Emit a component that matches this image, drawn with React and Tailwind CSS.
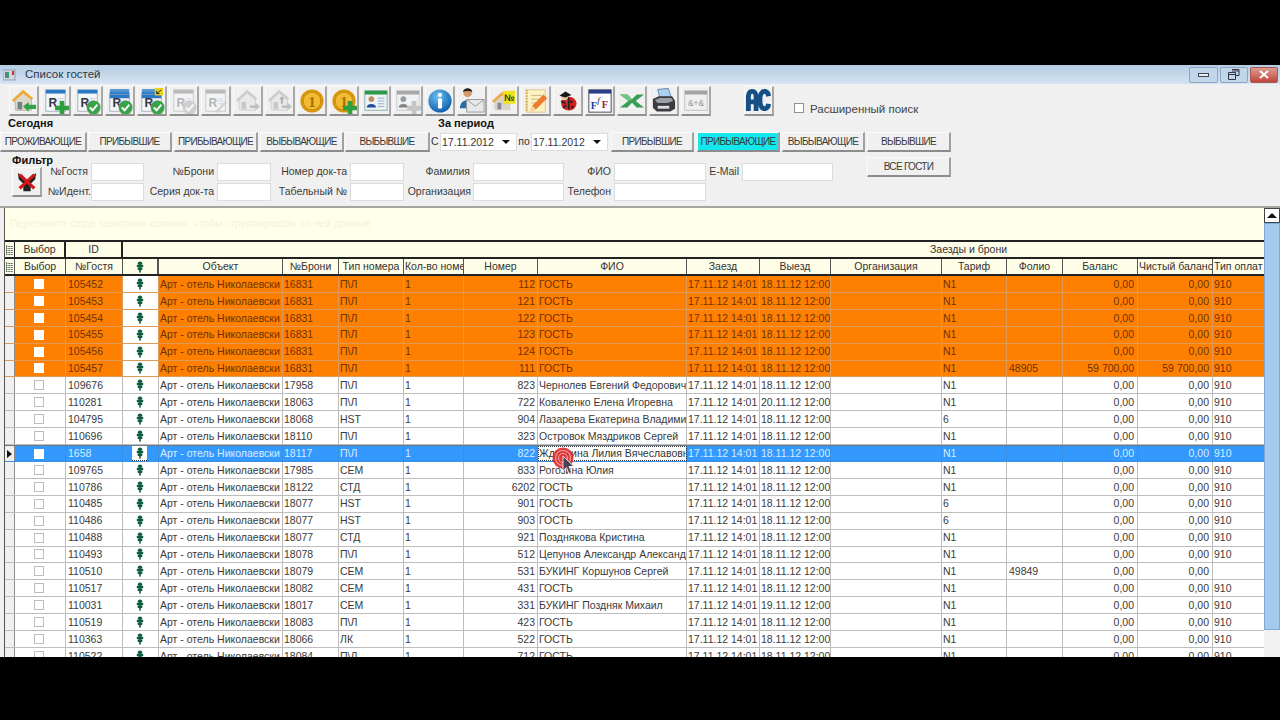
import React from "react";

const cols = [51, 57, 36, 124, 56, 65, 60, 74, 149, 73, 71, 111, 65, 56, 75, 75, 51];
const heads = ["Выбор", "№Гостя", "pin", "Объект", "№Брони", "Тип номера", "Кол-во номе", "Номер", "ФИО", "Заезд", "Выезд", "Организация", "Тариф", "Фолио", "Баланс", "Чистый баланс", "Тип оплат"];

const G = "ГОСТЬ";
const raw = [
  ["105452", "16831", "П\\Л", "112", G],
  ["105453", "16831", "П\\Л", "121", G],
  ["105454", "16831", "П\\Л", "122", G],
  ["105455", "16831", "П\\Л", "123", G],
  ["105456", "16831", "П\\Л", "124", G],
  ["105457", "16831", "П\\Л", "111", G, "18.11.12 12:00", "N1", "48905", "59 700,00", "59 700,00"],
  ["109676", "17958", "П\\Л", "823", "Чернолев Евгений Федорович"],
  ["110281", "18063", "П\\Л", "722", "Коваленко Елена Игоревна", "20.11.12 12:00"],
  ["104795", "18068", "HST", "904", "Лазарева Екатерина Владимир", "18.11.12 12:00", "6"],
  ["110696", "18110", "П\\Л", "323", "Островок Мяздриков Сергей"],
  ["1658", "18117", "П\\Л", "822", "Жданкина Лилия Вячеславовн"],
  ["109765", "17985", "СЕМ", "833", "Рогозина Юлия"],
  ["110786", "18122", "СТД", "6202", G],
  ["110485", "18077", "HST", "901", G, "18.11.12 12:00", "6"],
  ["110486", "18077", "HST", "903", G, "18.11.12 12:00", "6"],
  ["110488", "18077", "СТД", "921", "Позднякова Кристина"],
  ["110493", "18078", "П\\Л", "512", "Цепунов Александр Александ"],
  ["110510", "18079", "СЕМ", "531", "БУКИНГ Коршунов Сергей", "18.11.12 12:00", "N1", "49849", "0,00", "0,00", ""],
  ["110517", "18082", "СЕМ", "431", G],
  ["110031", "18017", "СЕМ", "331", "БУКИНГ Поздняк Михаил", "19.11.12 12:00"],
  ["110519", "18083", "П\\Л", "423", G],
  ["110363", "18066", "ЛК", "522", G],
  ["110522", "18084", "П\\Л", "712", G],
];

function Pin() {
  return (
    <svg width="8" height="12" viewBox="0 0 8 12">
      <g fill="#0f5c3c">
        <ellipse cx="4" cy="2.2" rx="2.2" ry="1.8" />
        <ellipse cx="4" cy="5" rx="3.4" ry="1.7" />
        <ellipse cx="4" cy="7.8" rx="2.6" ry="1.5" />
        <rect x="3.2" y="8" width="1.6" height="3.6" />
      </g>
    </svg>
  );
}

function ListMark() {
  return (
    <svg width="7" height="10" viewBox="0 0 7 10">
      <g stroke="#444" strokeWidth="1" strokeDasharray="1 0.6">
        <path d="M0 1.5h7M0 3.5h7M0 5.5h7M0 7.5h7M0 9.5h7" />
      </g>
      <path d="M0 0v10" stroke="#6a8a6a" strokeWidth="2" />
    </svg>
  );
}

const Badge = ({ kind, gray }) => {
  if (kind === "plus")
    return <path d="M18 14h5v5h5v5h-5v5h-5v-5h-5v-5h5z" fill={gray ? "#b4b4b4" : "#2f9e3e"} />;
  if (kind === "check")
    return (
      <g>
        <circle cx="20" cy="21" r="7.5" fill={gray ? "#c4c4c4" : "#3aa34a"} />
        <path d="M16 21l3 3 5-6" stroke="#fff" strokeWidth="2" fill="none" />
      </g>
    );
  return null;
};

function Doc({ stack, badge, gray, corner, pencil, letter = "R" }) {
  const bar = gray ? "#a8a8a8" : "#2b79c4";
  return (
    <svg width="26" height="26" viewBox="0 0 28 28" style={{ opacity: gray ? 0.75 : 1 }}>
      {stack && <rect x="3" y="1" width="21" height="8" rx="1" fill={bar} opacity="0.75" />}
      {stack && <rect x="3" y="4" width="21" height="8" rx="1" fill={bar} opacity="0.85" />}
      <rect x="3" y={stack ? 7 : 2} width="21" height={stack ? 18 : 23} fill="#f4f6f8" stroke={gray ? "#bbb" : "#9fb0c2"} />
      <rect x="3" y={stack ? 7 : 2} width="21" height="4" fill={bar} />
      <text x="6" y="20" fontSize="13" fontFamily="Liberation Sans" fontWeight="bold" fill={gray ? "#a0a0a0" : "#334"}>{letter}</text>
      <path d="M16 14h6M16 17h6M16 11.5h6" stroke="#ccd" />
      {corner && <rect x="17" y="0" width="9" height="8" fill="#e8d21a" />}
      {corner && <path d="M24 2l-5 4M19 3v3h3" stroke="#222" fill="none" />}
      {pencil && <path d="M13 25l11-11 2 2-11 11z" fill="#c8c8c8" />}
      {badge && <Badge kind={badge} gray={gray} />}
    </svg>
  );
}

function House({ gray, up }) {
  return (
    <svg width="26" height="26" viewBox="0 0 28 28" style={{ opacity: gray ? 0.55 : 1 }}>
      <path d="M4 12L13 4l9 7v13H5z" fill={gray ? "#e4e4e4" : "#ddd8cc"} stroke={gray ? "#bbb" : "#b8b4a8"} />
      <path d="M1 13L13 2l11 9-2 2-9-7-10 9z" fill={gray ? "#b0b0b0" : "#f0a83c"} />
      <rect x="7" y="15" width="5" height="8" fill={gray ? "#a8a8a8" : "#6f8488"} />
      {up && <path d="M13 12l3-3 3 3-2 0v5h-2v-5z" fill="#777" />}
      {gray ? (
        <path d="M27 20l-5-4v2.500h-6v3h6V24z" fill="#9a9a9a" />
      ) : (
        <path d="M13 20l6-5v3h8v4.500h-8v3z" fill="#2fa24a" />
      )}
    </svg>
  );
}

function Coin({ plus }) {
  return (
    <svg width="26" height="26" viewBox="0 0 28 28">
      <circle cx="14" cy="14" r="12.5" fill="#d8960e" />
      <circle cx="14" cy="14" r="9.5" fill="#f2bc30" stroke="#c98a10" />
      <text x="14" y="20" textAnchor="middle" fontSize="16" fontWeight="bold" fontFamily="Liberation Serif" fill="#a86c08">1</text>
      {plus && <Badge kind="plus" />}
    </svg>
  );
}

function Card({ gray }) {
  return (
    <svg width="26" height="26" viewBox="0 0 28 28" style={{ opacity: gray ? 0.7 : 1 }}>
      <rect x="2" y="3" width="24" height="21" fill="#eef3f6" stroke={gray ? "#bbb" : "#8aa"} />
      <rect x="2" y="3" width="24" height="4" fill={gray ? "#8a8a8a" : "#2f9a4a"} />
      <circle cx="9" cy="12" r="3" fill={gray ? "#777" : "#c58a5a"} />
      <path d="M4 21c0-5 10-5 10 0z" fill={gray ? "#555" : "#1f4f9a"} />
      {!gray && <path d="M16 11h7M16 14h7M16 17h7M16 20h7" stroke="#8fa8c8" />}
      {gray && <Badge kind="plus" gray />}
    </svg>
  );
}

function Info() {
  return (
    <svg width="26" height="26" viewBox="0 0 28 28">
      <defs>
        <radialGradient id="ig" cx="40%" cy="30%" r="75%">
          <stop offset="0" stopColor="#6cc0f4" />
          <stop offset="1" stopColor="#0c5aa8" />
        </radialGradient>
      </defs>
      <circle cx="14" cy="14" r="12.5" fill="url(#ig)" />
      <circle cx="14" cy="7.5" r="2.3" fill="#fff" />
      <rect x="11.8" y="11" width="4.4" height="11" rx="1" fill="#fff" />
    </svg>
  );
}

function Mail() {
  return (
    <svg width="27" height="27" viewBox="0 0 28 28">
      <circle cx="10" cy="6" r="4.5" fill="#d59a6a" />
      <path d="M5 5c1-5 9-5 10 0-3-1-7-1-10 0z" fill="#222" />
      <path d="M2 22c0-11 15-11 15 0z" fill="#2a6aa8" />
      <rect x="9" y="13" width="18" height="13" fill="#e6e8ea" stroke="#999" />
      <path d="M9 13l9 7 9-7" fill="none" stroke="#999" />
    </svg>
  );
}

function HouseNo() {
  return (
    <svg width="26" height="26" viewBox="0 0 28 28">
      <path d="M3 14L12 6l9 7v11H4z" fill="#d8d4c8" />
      <path d="M1 14L12 4l8 6-2 2-6-4-9 8z" fill="#eeaa44" />
      <rect x="7" y="16" width="4" height="7" fill="#889" />
      <rect x="13" y="3" width="13" height="14" fill="#f2e21c" />
      <text x="14" y="14" fontSize="10" fontWeight="bold" fontFamily="Liberation Sans" fill="#2a3a1a">№</text>
    </svg>
  );
}

function Note() {
  return (
    <svg width="26" height="26" viewBox="0 0 28 28">
      <rect x="4" y="2" width="20" height="24" fill="#fdf2c0" stroke="#d8c48a" />
      <path d="M4 2v24" stroke="#e0b050" strokeWidth="2.5" strokeDasharray="1.5 1.5" />
      <path d="M9 8h11M9 12h11M9 16h6" stroke="#c4b48a" />
      <path d="M8 25l2-6L22 7l4 4-12 12z" fill="#ee7a2a" />
      <path d="M8 25l2-6 4 4z" fill="#f4d8a8" />
    </svg>
  );
}

function Bug() {
  return (
    <svg width="24" height="24" viewBox="0 0 28 28">
      <ellipse cx="15" cy="17" rx="9" ry="8" fill="#d42020" />
      <circle cx="10" cy="9" r="4" fill="#e8c8a8" />
      <path d="M4 8l7-5 7 4-7 3z" fill="#181818" />
      <path d="M6 14l5 3M8 22l4-3M15 10v14" stroke="#222" strokeWidth="2" />
      <circle cx="18" cy="15" r="1.6" fill="#222" />
      <circle cx="19" cy="21" r="1.6" fill="#222" />
    </svg>
  );
}

function Ff() {
  return (
    <svg width="26" height="26" viewBox="0 0 28 28">
      <rect x="2" y="2" width="24" height="24" fill="#fbfbff" stroke="#445" />
      <rect x="2" y="2" width="24" height="4" fill="#2a3e8a" />
      <text x="4" y="23" fontSize="11" fontWeight="bold" fontFamily="Liberation Serif" fill="#1a3a9a">F</text>
      <text x="11" y="16" fontSize="10" fontStyle="italic" fontFamily="Liberation Serif" fill="#222">f</text>
      <text x="16" y="21" fontSize="11" fontWeight="bold" fontFamily="Liberation Serif" fill="#a02020">F</text>
    </svg>
  );
}

function Excel() {
  return (
    <svg width="26" height="26" viewBox="0 0 28 28">
      <path d="M1 7h8l5 5 5-5h8l-9 7 9 7h-8l-5-5-5 5H1l9-7z" fill="#3a9f55" />
      <path d="M1 7h8l5 5-4 2z" fill="#70c880" />
    </svg>
  );
}

function Printer() {
  return (
    <svg width="28" height="28" viewBox="0 0 28 28">
      <path d="M8 2l11-1 3 9H10z" fill="#a8d0f0" stroke="#68a" />
      <path d="M3 12l6-3h14l3 5v8l-5 3H7l-4-4z" fill="#3c3c40" />
      <path d="M5 13l5-2h12l2 3-6 2H8z" fill="#9aa0a8" />
      <path d="M8 19h12v3H8z" fill="#ddd" />
    </svg>
  );
}

function Grid() {
  return (
    <svg width="26" height="26" viewBox="0 0 28 28" style={{ opacity: 0.75 }}>
      <rect x="2" y="3" width="24" height="21" fill="#f0f0f0" stroke="#b0b0b0" />
      <rect x="2" y="3" width="24" height="4" fill="#8a8a8a" />
      <text x="14" y="19" textAnchor="middle" fontSize="9" fontFamily="Liberation Sans" fill="#777">&amp;+&amp;</text>
    </svg>
  );
}

function AC() {
  return (
    <svg width="27" height="27" viewBox="0 0 28 28">
      <path d="M1 25V11C1 5 3.500 2 7.500 2S14 5 14 11v14h-5v-7H6v7z M6 13h3v-2c0-3-.5-4-1.500-4S6 8 6 11z" fill="#164f86" fillRule="evenodd" />
      <path d="M27 9c-.5-4.500-3.500-7-6.500-7C15.500 2 13 7 13 13.500S15.500 25 20.500 25c3 0 6-2.500 6.500-7l-5-1c-.3 2-1 3-1.800 3-1.500 0-2.200-2.500-2.200-6.500S18.700 7 20.200 7c.8 0 1.500 1 1.800 3z" fill="#164f86" />
    </svg>
  );
}

function FilterX() {
  return (
    <svg width="22" height="22" viewBox="0 0 24 24">
      <path d="M2 2l8 8h4l8-8-1 7-5 5v8H8v-8L3 9z" fill="#222" />
      <path d="M4 4l16 15M20 4L4 19" stroke="#d01818" strokeWidth="3.5" />
    </svg>
  );
}

const tools = [
  <House />, <Doc badge="plus" />, <Doc badge="check" />, <Doc stack badge="check" />, <Doc stack corner badge="check" />,
  <Doc gray badge="check" />, <Doc gray pencil />, <House gray />, <House gray up />, <Coin />, <Coin plus />,
  <Card />, <Card gray />, <Info />, <Mail />, <HouseNo />, <Note />, <Bug />, <Ff />, <Excel />, <Printer />, <Grid />,
];

function ToolBtn({ children, className = "" }) {
  return (
    <div className={"w-[30px] h-[30px] shrink-0 flex items-center justify-center bg-[#f0f0f0] border border-t-[#fbfbfb] border-l-[#fbfbfb] border-r-[#a8a8a8] border-b-[#909090] border-b-2 border-r-2 " + className}>
      {children}
    </div>
  );
}

function Btn({ w, children, cyan, className = "" }) {
  return (
    <div
      style={{ width: w }}
      className={
        "shrink-0 h-[20px] flex items-center justify-center text-[10px] tracking-[-0.7px] text-[#3a3a3a] whitespace-nowrap border border-t-[#fafafa] border-l-[#fafafa] border-r-[#a0a0a0] border-b-[#8c8c8c] border-b-2 border-r-2 " +
        (cyan ? "bg-[#12e8ee] text-[#0b3a66] " : "bg-[#f0f0f0] ") +
        className
      }
    >
      {children}
    </div>
  );
}

function DateBox() {
  return (
    <div className="w-[77px] h-[18px] shrink-0 bg-white border border-[#dcdcdc] flex items-center justify-between pl-[1px] pr-[6px]">
      <span className="text-[10.5px] text-[#333] leading-none">17.11.2012</span>
      <span className="w-0 h-0 border-l-[4px] border-r-[4px] border-t-[4px] border-l-transparent border-r-transparent border-t-[#111]" />
    </div>
  );
}

function Field() {
  return <div className="h-[18px] bg-white border border-[#dcdcdc]" />;
}

function Lbl({ children, pr = "pr-[3px]" }) {
  return <div className={`h-[18px] ${pr} flex items-center justify-end text-[10.5px] text-[#3c3c3c] whitespace-nowrap overflow-visible`}>{children}</div>;
}

function Row({ data }) {
  const [id, bron, type, num, fio, out = "18.11.12 12:00", tarif = "N1", folio = "", bal = "0,00", net = "0,00", pay = "910"] = data;
  const i = raw.indexOf(data);
  const orange = i < 6;
  const sel = id === "1658";
  const bg = sel ? "bg-[#3399ff]" : orange ? "bg-[#ff8000]" : "bg-white";
  const txt = sel ? "text-[#d8ecff]" : orange ? "text-[#6e3200]" : "text-[#3a3a3a]";
  const line = sel ? "border-[#3a8fe0]" : orange ? "border-[#dd9a58]" : "border-[#bdbdbd]";
  const Cell = ({ w, right, className = "", children }) => (
    <div
      style={{ width: w }}
      className={`shrink-0 h-full overflow-hidden whitespace-nowrap border-r ${line} pl-[1px] pr-[2px] flex items-center ${right ? "justify-end" : ""} ${className}`}
    >
      {children}
    </div>
  );
  return (
    <div className={`flex h-[16.92px] shrink-0 border-b ${line} ${bg} ${txt} text-[10.5px] leading-none ${sel ? "border-t border-t-[#6a7a8a]" : ""}`}>
      <div className="w-[10px] shrink-0 bg-[#f0f0f0] border-r border-[#8c8c8c] flex items-center justify-center">
        {sel && <span className="w-0 h-0 border-t-[4px] border-b-[4px] border-l-[5px] border-t-transparent border-b-transparent border-l-[#111]" />}
      </div>
      <Cell w={cols[0]} className="justify-center !pl-0 !pr-[2px]">
        <span className={`w-[10px] h-[10px] ${orange || sel ? "bg-white" : "bg-white border border-[#bdbdbd]"}`} />
      </Cell>
      <Cell w={cols[1]} className="pl-[2px]">{id}</Cell>
      <Cell w={cols[2]} className={`justify-center !pl-0 !pr-[2px] ${orange ? "bg-white" : ""}`}>
        {sel ? (
          <span className="w-[15px] h-full bg-white border-b border-dotted border-[#333] flex items-center justify-center"><Pin /></span>
        ) : (
          <Pin />
        )}
      </Cell>
      <Cell w={cols[3]}>Арт - отель Николаевски</Cell>
      <Cell w={cols[4]}>{bron}</Cell>
      <Cell w={cols[5]}>{type}</Cell>
      <Cell w={cols[6]}>1</Cell>
      <Cell w={cols[7]} right className="pr-0">{num}</Cell>
      <Cell w={cols[8]} className={sel ? "bg-white text-[#333] outline outline-1 -outline-offset-1 outline-dotted outline-[#333]" : ""}>{fio}</Cell>
      <Cell w={cols[9]}>17.11.12 14:01</Cell>
      <Cell w={cols[10]}>{out}</Cell>
      <Cell w={cols[11]} />
      <Cell w={cols[12]}>{tarif}</Cell>
      <Cell w={cols[13]} className="pl-[2px]">{folio}</Cell>
      <Cell w={cols[14]} right className="pr-[3px]">{bal}</Cell>
      <Cell w={cols[15]} right className="pr-[3px]">{net}</Cell>
      <Cell w={cols[16]} className="border-r-0">{pay}</Cell>
    </div>
  );
}

export default function App() {
  return (
    <div className="w-[1280px] h-[720px] bg-black overflow-hidden pt-[65px] [font-family:'Liberation_Sans',Arial,sans-serif]">
      <div className="relative w-[1280px] h-[592px] bg-[#f0f0f0] flex flex-col overflow-hidden">
        {/* title bar */}
        <div className="h-[19px] shrink-0 flex items-center bg-gradient-to-b from-[#b4cce2] to-[#d6e4f2] pl-[3px] pr-[2px]">
          <svg width="13" height="12" viewBox="0 0 13 12" className="shrink-0">
            <rect x="0" y="1" width="12" height="10" fill="#cfd8e0" stroke="#8fa3b5" />
            <rect x="2" y="3" width="4" height="6" fill="#4f8f7a" />
            <rect x="9" y="2" width="2" height="4" fill="#d03030" />
          </svg>
          <span className="ml-[9px] text-[11.5px] text-[#2a3a4a]">Список гостей</span>
          <div className="ml-auto flex gap-[2px] items-center">
            <div className="w-[29px] h-[16px] rounded-[2px] border border-[#8aa6c2] bg-[#c2d6ea] flex items-center justify-center">
              <span className="w-[11px] h-[4px] border border-[#445] bg-[#e6eef6]" />
            </div>
            <div className="w-[28px] h-[16px] rounded-[2px] border border-[#8aa6c2] bg-[#c2d6ea] flex items-center justify-center">
              <svg width="12" height="11" viewBox="0 0 12 11"><path d="M4 .5h7v6H8M.5 3.500h7v7h-7z M.5 5.500h7M4 2h7" fill="none" stroke="#334" /></svg>
            </div>
            <div className="w-[28px] h-[16px] rounded-[2px] border border-[#a85a50] bg-gradient-to-b from-[#dc9a90] to-[#c0443a] flex items-center justify-center">
              <svg width="10" height="9" viewBox="0 0 10 9"><path d="M1 1l8 7M9 1L1 8" stroke="#fff" strokeWidth="2" /></svg>
            </div>
          </div>
        </div>

        {/* toolbar */}
        <div className="h-[32px] shrink-0 flex items-start pt-[2px] pl-[9px]">
          <div className="flex gap-[2px]">
            {tools.map((t, i) => <ToolBtn key={i}>{t}</ToolBtn>)}
          </div>
          <ToolBtn className="ml-[33px]"><AC /></ToolBtn>
          <div className="ml-[20px] mt-[17px] w-[10px] h-[10px] bg-white border border-[#8f8f8f] shrink-0" />
          <span className="ml-[6px] mt-[16px] text-[11.5px] leading-[14px] text-[#444] whitespace-nowrap">Расширенный поиск</span>
        </div>

        {/* captions */}
        <div className="h-[16px] shrink-0 flex items-start pt-[1px] text-[11px] font-bold text-[#111] leading-[13px]">
          <span className="ml-[8px] w-[430px]">Сегодня</span>
          <span>За период</span>
        </div>

        {/* quick filter buttons */}
        <div className="h-[20px] shrink-0 flex items-center">
          <Btn w={87}>ПРОЖИВАЮЩИЕ</Btn>
          <Btn w={84} className="ml-[1px]">ПРИБЫВШИЕ</Btn>
          <Btn w={84} className="ml-[2px]">ПРИБЫВАЮЩИЕ</Btn>
          <Btn w={84} className="ml-[2px]">ВЫБЫВАЮЩИЕ</Btn>
          <Btn w={85} className="ml-[1px]">ВЫБЫВШИЕ</Btn>
          <span className="w-[10px] pl-[1px] text-[10.5px] text-[#333]">С</span>
          <DateBox />
          <span className="w-[14px] text-center text-[10.5px] text-[#333]">по</span>
          <DateBox />
          <Btn w={83} className="ml-[3px]">ПРИБЫВШИЕ</Btn>
          <Btn w={83} cyan className="ml-[3px]">ПРИБЫВАЮЩИЕ</Btn>
          <Btn w={83} className="ml-[2px]">ВЫБЫВАЮЩИЕ</Btn>
          <Btn w={84} className="ml-[2px]">ВЫБЫВШИЕ</Btn>
        </div>

        {/* filter */}
        <div className="h-[54px] shrink-0 flex items-start pl-[12px] relative">
          <div className="w-[30px] shrink-0 pt-[1px]">
            <div className="h-[14px] text-[11px] font-bold text-[#111] leading-[14px] whitespace-nowrap">Фильтр</div>
            <ToolBtn><FilterX /></ToolBtn>
          </div>
          <div className="mt-[11px] grid gap-y-[2px] grid-cols-[49px_53px_73px_54px_79px_54px_69px_91px_50px_92px_36px_91px]">
            <Lbl>№Гостя</Lbl><Field />
            <Lbl>№Брони</Lbl><Field />
            <Lbl>Номер док-та</Lbl><Field />
            <Lbl>Фамилия</Lbl><Field />
            <Lbl>ФИО</Lbl><Field />
            <Lbl>E-Mail</Lbl><Field />
            <Lbl pr="pr-0">№Идент.</Lbl><Field />
            <Lbl>Серия док-та</Lbl><Field />
            <Lbl>Табельный №</Lbl><Field />
            <Lbl pr="pr-[2px]">Организация</Lbl><Field />
            <Lbl>Телефон</Lbl><Field />
          </div>
          <Btn w={84} className="ml-[34px] mt-[5px]">ВСЕ ГОСТИ</Btn>
        </div>

        {/* grid area */}
        <div className="flex-1 min-h-0 flex pl-[4px] border-t-2 border-[#a6a6a0]">
          <div className="w-[1260px] shrink-0 flex flex-col overflow-hidden border-l border-[#555]">
            <div className="h-[32px] shrink-0 bg-[#ffffea] flex items-center pl-[5px] text-[10.5px] text-[#f4f4d6] whitespace-nowrap">
              Перетяните сюда заголовок колонки, чтобы сгруппировать по ней данные
            </div>
            <div className="h-[15px] shrink-0 flex bg-[#fdfde8] border-t-2 border-b-2 border-[#222] text-[10.5px] text-[#333] leading-none box-content">
              <div className="w-[10px] shrink-0 border-r border-[#222] flex items-center justify-center"><ListMark /></div>
              <div style={{ width: cols[0] }} className="shrink-0 border-r-2 border-[#222] flex items-center justify-center">Выбор</div>
              <div style={{ width: cols[1] }} className="shrink-0 border-r-2 border-[#222] flex items-center justify-center">ID</div>
              <div className="flex-1 flex items-center pl-[807px] whitespace-nowrap">Заезды и брони</div>
            </div>
            <div className="h-[15px] shrink-0 flex bg-[#fdfde8] border-b-2 border-[#222] text-[10.5px] text-[#333] leading-none box-content">
              <div className="w-[10px] shrink-0 border-r border-[#555] flex items-center justify-center"><ListMark /></div>
              {heads.map((h, i) => (
                <div key={i} style={{ width: cols[i] }} className={`shrink-0 overflow-hidden whitespace-nowrap flex items-center ${i === heads.length - 1 ? "" : "border-r border-[#555]"} ${i === 2 ? "border-r-2 border-[#222]" : ""} ${i === 16 || i === 15 || i === 6 ? "justify-start pl-[1px]" : "justify-center"}`}>
                  {h === "pin" ? <Pin /> : h}
                </div>
              ))}
            </div>
            <div className="flex-1 min-h-0 overflow-hidden flex flex-col">
              {raw.map((r) => <Row key={r[0]} data={r} />)}
            </div>
          </div>
          <div className="w-[16px] shrink-0 flex flex-col">
            <div className="h-[15px] shrink-0 bg-white border border-[#444] flex items-center justify-center">
              <span className="w-0 h-0 border-l-[5px] border-r-[5px] border-b-[5px] border-l-transparent border-r-transparent border-b-[#111]" />
            </div>
            <div className="h-[407px] shrink-0 bg-[#a4cbee] border border-[#7cabd8]" />
            <div className="flex-1 bg-[#f2f2f2]" />
          </div>
        </div>

        {/* recorded mouse click marker */}
        <svg width="30" height="34" viewBox="0 0 30 34" className="absolute left-[549px] top-[379px] pointer-events-none">
          <circle cx="14" cy="14" r="10.500" fill="#e0282c" opacity="0.9" />
          <circle cx="14" cy="14" r="7.500" fill="none" stroke="#f59a9a" strokeWidth="1.2" />
          <circle cx="14" cy="14" r="4.500" fill="none" stroke="#f59a9a" strokeWidth="1.2" />
          <path d="M14 12v15l3.500-3.500 2.500 6 2.500-1-2.500-6h5z" fill="#445" stroke="#fff" strokeWidth="0.8" />
        </svg>
      </div>
    </div>
  );
}
